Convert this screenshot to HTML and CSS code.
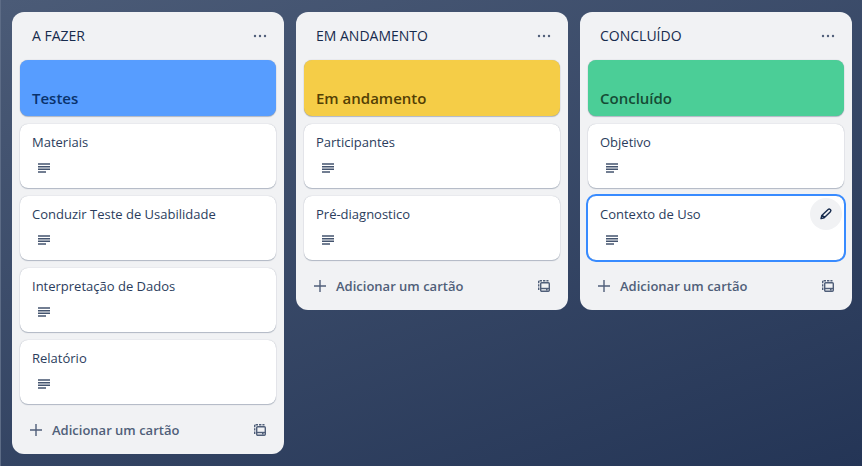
FILE: index.html
```html
<!DOCTYPE html>
<html lang="pt-BR">
<head>
<meta charset="utf-8">
<title>Quadro</title>
<link rel="stylesheet" href="styles.css">
</head>
<body>
<svg class="sprite" aria-hidden="true">
  <symbol id="more" viewBox="0 0 16 16"><circle cx="3" cy="8" r="1.2"/><circle cx="8" cy="8" r="1.2"/><circle cx="13" cy="8" r="1.2"/></symbol>
  <symbol id="desc" viewBox="0 0 16 16"><path d="M2 3.3h12v1.4H2zM2 6h12v1.4H2zM2 8.6h12V10H2zM2 11.3h8v1.4H2z"/></symbol>
  <symbol id="plus" viewBox="0 0 16 16"><path d="M7.3 2h1.4v5.3H14v1.4H8.7V14H7.3V8.7H2V7.3h5.3z"/></symbol>
  <symbol id="template" viewBox="0 0 16 16"><g fill="none" stroke="currentColor" stroke-width="1.4"><rect x="4.7" y="4.7" width="8.6" height="8.6" rx="1"/><path d="M4.7 10.5h8.6"/><path d="M2.7 12V2.7h9.8" stroke-dasharray="2.4 1"/></g><path d="M10 10.8h1.6v1.8H10z"/></symbol>
  <symbol id="pencil" viewBox="0 0 16 16"><path d="M3 12.6l.8-3.2 6.3-6a1.5 1.5 0 0 1 2.1 0l.2.2a1.5 1.5 0 0 1 0 2.1l-6.2 6.1zM4.3 9.2l2.2 2.2" fill="none" stroke="currentColor" stroke-width="1.4" stroke-linejoin="round"/></symbol>
</svg>
<main class="board">
  <section class="list">
    <header class="list-header"><h2>A FAZER</h2><button class="icon-button" aria-label="Ações da lista"><svg><use href="#more"/></svg></button></header>
    <ul class="cards">
      <li class="card cover blue"><a href="#">Testes</a></li>
      <li class="card"><a href="#">Materiais</a><svg class="badge"><use href="#desc"/></svg></li>
      <li class="card"><a href="#">Conduzir Teste de Usabilidade</a><svg class="badge"><use href="#desc"/></svg></li>
      <li class="card"><a href="#">Interpretação de Dados</a><svg class="badge"><use href="#desc"/></svg></li>
      <li class="card"><a href="#">Relatório</a><svg class="badge"><use href="#desc"/></svg></li>
    </ul>
    <footer class="list-footer"><button class="add"><svg><use href="#plus"/></svg>Adicionar um cartão</button><button class="icon-button" aria-label="Criar a partir de modelo"><svg><use href="#template"/></svg></button></footer>
  </section>
  <section class="list">
    <header class="list-header"><h2>EM ANDAMENTO</h2><button class="icon-button" aria-label="Ações da lista"><svg><use href="#more"/></svg></button></header>
    <ul class="cards">
      <li class="card cover yellow"><a href="#">Em andamento</a></li>
      <li class="card"><a href="#">Participantes</a><svg class="badge"><use href="#desc"/></svg></li>
      <li class="card"><a href="#">Pré-diagnostico</a><svg class="badge"><use href="#desc"/></svg></li>
    </ul>
    <footer class="list-footer"><button class="add"><svg><use href="#plus"/></svg>Adicionar um cartão</button><button class="icon-button" aria-label="Criar a partir de modelo"><svg><use href="#template"/></svg></button></footer>
  </section>
  <section class="list">
    <header class="list-header"><h2>CONCLUÍDO</h2><button class="icon-button" aria-label="Ações da lista"><svg><use href="#more"/></svg></button></header>
    <ul class="cards">
      <li class="card cover green"><a href="#">Concluído</a></li>
      <li class="card"><a href="#">Objetivo</a><svg class="badge"><use href="#desc"/></svg></li>
      <li class="card selected"><a href="#">Contexto de Uso</a><svg class="badge"><use href="#desc"/></svg><button class="edit" aria-label="Editar cartão"><svg><use href="#pencil"/></svg></button></li>
    </ul>
    <footer class="list-footer"><button class="add"><svg><use href="#plus"/></svg>Adicionar um cartão</button><button class="icon-button" aria-label="Criar a partir de modelo"><svg><use href="#template"/></svg></button></footer>
  </section>
</main>
</body>
</html>
```
FILE: styles.css
```css
* { box-sizing: border-box; }
body {
  margin: 0;
  font: 13px/20px "Open Sans", "Noto Sans", sans-serif;
  color: #172b4d;
}
.sprite { display: none; }
svg { width: 16px; height: 16px; fill: currentColor; flex: none; }
button { border: 0; background: none; font: inherit; color: #505f79; padding: 0; }
.board {
  min-height: 100vh;
  padding: 12px;
  border-left: 1px solid #5d6c86;
  padding-left: 11px;
  display: flex;
  align-items: flex-start;
  gap: 12px;
  overflow: hidden;
  background: linear-gradient(160deg, #4b5b77, #243556);
}
.list {
  flex: 0 0 272px;
  padding: 8px;
  border-radius: 12px;
  background: #f1f2f4;
}
.list-header {
  display: flex;
  align-items: center;
  justify-content: space-between;
  height: 32px;
  margin-bottom: 8px;
  padding-left: 12px;
}
h2 { margin: 0; font-size: 14px; line-height: 20px; font-weight: 400; }
.icon-button {
  display: flex;
  align-items: center;
  justify-content: center;
  width: 32px;
  height: 32px;
}
.cards {
  list-style: none;
  margin: 0;
  padding: 0;
  display: flex;
  flex-direction: column;
  gap: 8px;
}
.card {
  position: relative;
  min-height: 64px;
  padding: 8px 12px;
  border-radius: 8px;
  background: #fff;
  color: #2b3d5d;
  box-shadow: 0 1px 1px #091e4240, 0 0 1px #091e424f;
}
.card a { display: block; color: inherit; text-decoration: none; }
.badge { display: block; margin: 8px 4px 0; color: #44546f; }
.cover {
  min-height: 56px;
  display: flex;
  align-items: flex-end;
}
.cover a { font-size: 15px; font-weight: 600; }
.blue { background: #579dff; color: #09326c; }
.yellow { background: #f5cd47; color: #533f04; }
.green { background: #4bce97; color: #164b35; }
.selected { outline: 2px solid #388bff; }
.edit {
  position: absolute;
  top: 2px;
  right: 2px;
  display: flex;
  align-items: center;
  justify-content: center;
  width: 32px;
  height: 32px;
  border-radius: 50%;
  background: #f1f2f4;
  color: #172b4d;
}
.list-footer {
  display: flex;
  justify-content: space-between;
  margin-top: 10px;
}
.add {
  display: flex;
  align-items: center;
  gap: 8px;
  padding: 0 8px;
  font-weight: 600;
}
```
